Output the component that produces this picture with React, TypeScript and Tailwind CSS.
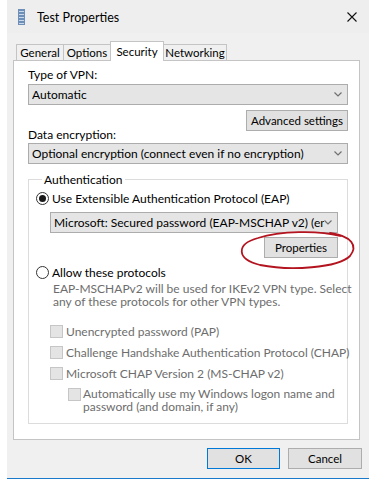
import type { ReactNode } from 'react';

/** 콤보박스 화살표 */
function Chevron() {
  return (
    <svg width="8" height="5" viewBox="0 0 8 5" className="shrink-0">
      <path d="M0.5 0.5 L4 4 L7.5 0.5" fill="none" stroke="#707070" strokeWidth="1.2" />
    </svg>
  );
}

function Combo({ text, className = '' }: { text: string; className?: string }) {
  return (
    <div className={`h-[21px] min-w-0 overflow-hidden flex items-center border border-[#acacac] bg-[#e5e5e5] pl-[3px] pr-[5px] ${className}`}>
      <span className="flex-1 min-w-0 overflow-hidden whitespace-nowrap leading-[15px]">{text}</span>
      <Chevron />
    </div>
  );
}

function Btn({ children, className = '' }: { children: ReactNode; className?: string }) {
  return (
    <button className={`h-[21px] flex items-center justify-center border bg-[#e1e1e1] text-[11.5px] leading-[15px] ${className}`}>
      {children}
    </button>
  );
}

function Radio({ checked }: { checked?: boolean }) {
  return (
    <span className="w-[13px] h-[13px] shrink-0 rounded-full border border-[#333] bg-white flex items-center justify-center">
      {checked && <span className="w-[7px] h-[7px] rounded-full bg-[#1a1a1a]" />}
    </span>
  );
}

function Check() {
  return <span className="w-[13px] h-[13px] shrink-0 mt-[1px] border border-[#c6c6c6] bg-[#e4e4e4]" />;
}

const tabs = [
  { label: 'General', w: 'w-[48px]' },
  { label: 'Options', w: 'w-[48px]' },
  { label: 'Security', w: 'w-[54px]', active: true },
  { label: 'Networking', w: 'w-[64px]' },
];

const protocols = [
  'Unencrypted password (PAP)',
  'Challenge Handshake Authentication Protocol (CHAP)',
  'Microsoft CHAP Version 2 (MS-CHAP v2)',
];

export default function App() {
  return (
    <div className="relative w-[375px] h-[487px] overflow-hidden bg-white text-[12px] text-black font-['Lato','Liberation_Sans',sans-serif]">
      <div className="ml-[7px] w-[362px] h-[479px] bg-[#f0f0f0] border-b border-[#1979ca] flex flex-col">
        {/* Title bar */}
        <div className="h-[33px] shrink-0 flex items-center pl-[11px] pr-[12px] bg-[#eeeeee]">
          <svg width="7" height="16" viewBox="0 0 7 16">
            <rect x="0" y="0" width="7" height="16" fill="#6d8fb8" />
            <rect x="1" y="2" width="5" height="1" fill="#c9d8ea" />
            <rect x="1" y="5" width="5" height="1" fill="#c9d8ea" />
            <rect x="1" y="8" width="5" height="1" fill="#c9d8ea" />
            <rect x="1" y="11" width="5" height="1" fill="#c9d8ea" />
            <rect x="1" y="14" width="5" height="1" fill="#c9d8ea" />
          </svg>
          <span className="ml-[12px] pt-[2px] text-[12.5px] leading-[15px]">Test Properties</span>
          <svg width="10" height="10" viewBox="0 0 10 10" className="ml-auto">
            <path d="M0.5 0.5 L9.5 9.5 M9.5 0.5 L0.5 9.5" stroke="#111" strokeWidth="1.1" />
          </svg>
        </div>

        {/* Tabs */}
        <div className="mt-[8px] h-[19px] flex items-end ml-[9px]">
          {tabs.map((t, i) => (
            <div
              key={t.label}
              className={`${t.w} ${i > 0 ? '-ml-px' : ''} flex items-center justify-center border border-b-0 border-[#c4c4c4] text-[11.5px] leading-[15px] ${
                t.active ? 'h-[20px] -mb-px bg-white relative z-10' : 'h-[16px] bg-[#f0f0f0]'
              }`}
            >
              {t.label}
            </div>
          ))}
        </div>

        {/* Tab panel */}
        <div className="ml-[6px] w-[347px] border border-[#c4c4c4] bg-white pl-[14px] pr-[11px] pt-[6px] pb-[15px]">
          <div className="h-[15px] leading-[15px]">Type of VPN:</div>
          <Combo text="Automatic" className="mt-[2px]" />
          <div className="flex justify-end mt-[5px]">
            <Btn className="w-[102px] border-[#adadad]">Advanced settings</Btn>
          </div>
          <div className="h-[15px] leading-[15px] -mt-[4px]">Data encryption:</div>
          <Combo text="Optional encryption (connect even if no encryption)" className="mt-[1px]" />

          <fieldset className="mt-[8px] min-w-0 w-[320px] border border-[#dcdcdc] pl-[7px] pr-[9px] pb-[10px]">
            <legend className="ml-[6px] px-[2px] leading-[15px]">Authentication</legend>

            <div className="mt-[4px] h-[15px] flex items-center gap-[3px] leading-[15px]">
              <Radio checked />
              <span>Use Extensible Authentication Protocol (EAP)</span>
            </div>
            <Combo text="Microsoft: Secured password (EAP-MSCHAP v2) (encryption enabled)" className="mt-[6px] ml-[14px]" />
            <div className="flex justify-end mt-[4px]">
              <Btn className="w-[74px] border-[#adadad]">Properties</Btn>
            </div>

            <div className="mt-[7px] h-[15px] flex items-center gap-[3px] leading-[15px]">
              <Radio />
              <span>Allow these protocols</span>
            </div>
            <p className="mt-[2px] ml-[17px] leading-[13px] text-[#6d6d6d] whitespace-nowrap">
              EAP-MSCHAPv2 will be used for IKEv2 VPN type. Select
              <br />
              any of these protocols for other VPN types.
            </p>

            <div className="mt-[16px] ml-[14px] flex flex-col gap-[6px] text-[#6d6d6d] leading-[15px] whitespace-nowrap">
              {protocols.map(p => (
                <div key={p} className="flex items-start gap-[3px]">
                  <Check />
                  <span>{p}</span>
                </div>
              ))}
              <div className="ml-[18px] flex items-start gap-[2px]">
                <Check />
                <span className="leading-[13px]">
                  Automatically use my Windows logon name and
                  <br />
                  password (and domain, if any)
                </span>
              </div>
            </div>
          </fieldset>
        </div>

        {/* Dialog buttons */}
        <div className="mt-[8px] pr-[7px] flex justify-end gap-[8px]">
          <Btn className="w-[73px] border-[#0078d7]">OK</Btn>
          <Btn className="w-[74px] border-[#adadad]">Cancel</Btn>
        </div>
      </div>

      {/* 빨간 강조 원 */}
      <svg className="absolute left-[236px] top-[226px] pointer-events-none" width="124" height="48" viewBox="236 226 124 48">
        <path
          d="M330 233 C 352 236, 358 246, 350 256 C 338 268, 290 271, 260 265 C 236 259, 236 244, 258 238 C 280 231, 318 230, 340 236"
          fill="none"
          stroke="#b3141f"
          strokeWidth="1.8"
          strokeLinecap="round"
        />
      </svg>
    </div>
  );
}
